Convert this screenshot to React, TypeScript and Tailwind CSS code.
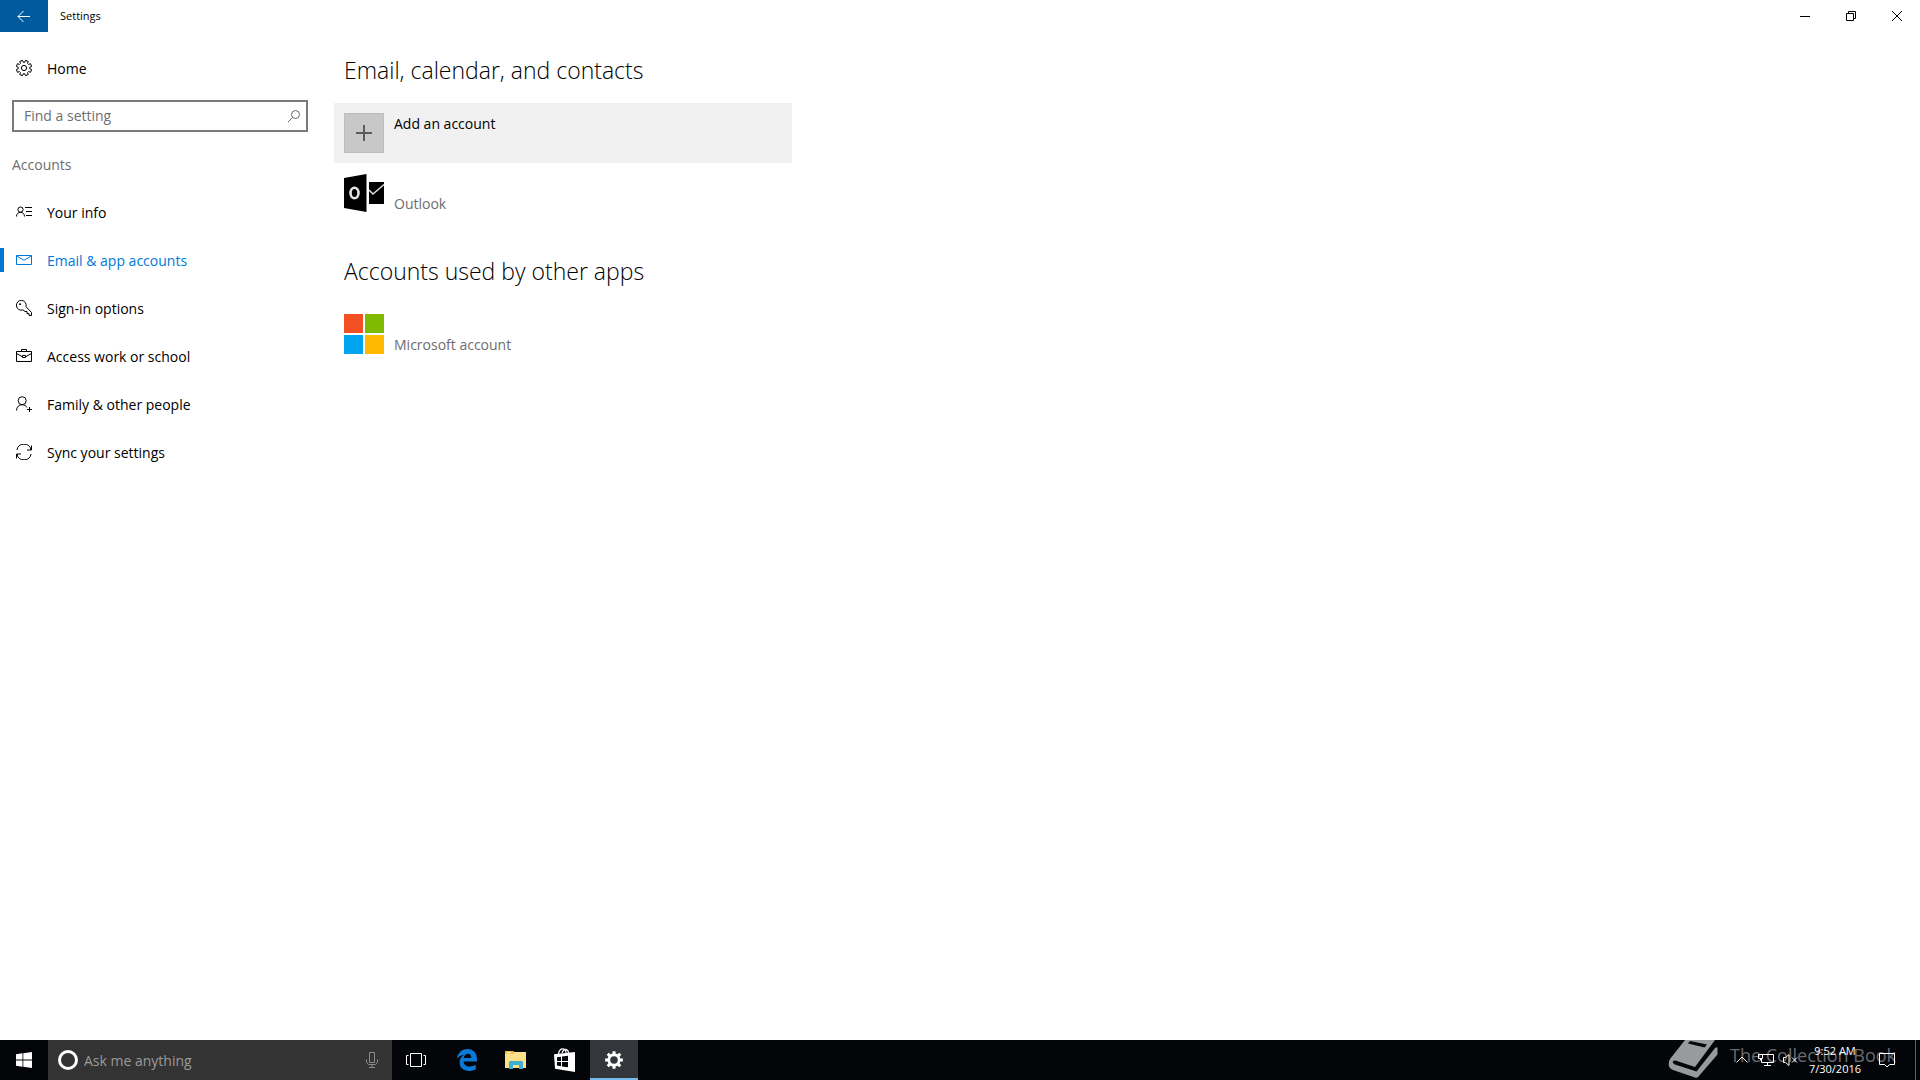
import type { ReactNode } from "react";

type IconProps = { className?: string };

function Line({ children, size = 16, className = "", width = 1 }: { children: ReactNode; size?: number; className?: string; width?: number }) {
  return (
    <svg aria-hidden="true" width={size} height={size} viewBox={`0 0 ${size} ${size}`} fill="none" stroke="currentColor" strokeWidth={width} className={`shrink-0 ${className}`}>
      {children}
    </svg>
  );
}

function gearPath(c: number, teeth: number, outer: number, inner: number, topHalf: number, baseHalf: number, phase: number) {
  const pts: string[] = [];
  for (let i = 0; i < teeth; i++) {
    const a = ((i + phase) / teeth) * Math.PI * 2 - Math.PI / 2;
    const steps: [number, number][] = [[inner, -baseHalf], [outer, -topHalf], [outer, topHalf], [inner, baseHalf]];
    for (const [r, d] of steps) {
      pts.push(`${(c + r * Math.cos(a + d)).toFixed(2)} ${(c + r * Math.sin(a + d)).toFixed(2)}`);
    }
  }
  return `M${pts.join("L")}Z`;
}

const outlineGear = gearPath(8, 8, 7.8, 5.8, 0.2, 0.26, 0.5);
const solidGear = gearPath(10, 8, 9, 6.6, 0.17, 0.24, 0);

const GearIcon = () => (
  <Line>
    <path d={outlineGear} />
    <circle cx="8" cy="8" r="2.6" />
  </Line>
);
const InfoIcon = () => (
  <Line>
    <circle cx="4.5" cy="5.6" r="2.6" />
    <path d="M.5 12.5c0-2.600 1.600-4.200 4-4.200s4 1.600 4 4.200M9 3.500h7M10 7.500h6M10 11.500h6" />
  </Line>
);
const MailIcon = () => (
  <Line>
    <path d="M.5 3.500h15v9H.5zM.5 4l7.500 4.200L15.500 4" />
  </Line>
);
const KeyIcon = () => (
  <Line>
    <path d="M7 9.900A4.900 4.900 0 1 1 10 6.700L15.500 12.500v3h-2.500v-2h-2v-2H9L7 9.900" />
    <circle cx="4" cy="4.200" r=".6" fill="currentColor" />
  </Line>
);
const CaseIcon = () => (
  <Line>
    <path d="M.5 3.500h15v10H.5zM5.500 3.500v-2h5v2M.5 5.500l5.500 3M15.500 5.500l-5.500 3M6.500 7.500h3v2h-3z" />
  </Line>
);
const FamilyIcon = () => (
  <Line>
    <circle cx="6.200" cy="4.700" r="4" />
    <path d="M.5 14.500c.2-3.600 2.200-5.800 5.700-5.800 2.200 0 3.800 1 4.800 2.800M13.500 11v5M11 13.500h5" />
  </Line>
);
const SyncIcon = () => (
  <Line>
    <path d="M.9 6A7.200 7.200 0 0 1 15 5.800M15.500 1.500v4.500H11M15.100 10A7.200 7.200 0 0 1 1 10.200M.5 14.500V10H5" />
  </Line>
);

const WindowsIcon = () => (
  <svg aria-hidden="true" width="16" height="16" viewBox="0 0 16 16" fill="#fff">
    <path d="M0 2.200 6.500 1.300V7.500H0zM7.300 1.200 16 0v7.500H7.300zM0 8.400h6.500v6.300L0 13.800zM7.300 8.400H16V16l-8.700-1.200z" />
  </svg>
);

const MicIcon = () => (
  <svg aria-hidden="true" width="12" height="18" viewBox="0 0 12 18" fill="none" stroke="#8d8d8d">
    <path d="M3.500 1.500h5v10h-5zM.5 8.500v3l2 2h7l2-2v-3M6 13.500v3M3 16.500h6" />
  </svg>
);

const TaskViewIcon = () => (
  <svg aria-hidden="true" width="20" height="14" viewBox="0 0 20 14" fill="none" stroke="#fff">
    <path d="M4.500.5h11v13h-11zM2.500 2.500h-2v9h2M17.500 2.500h2v9h-2" />
  </svg>
);

const EdgeIcon = () => (
  <svg aria-hidden="true" width="20" height="22" viewBox="0 0 20 22" fill="#0a7ad8">
    <path d="M0 9.800C.8 4 4.600 0 10.500 0 16.500 0 20 4.400 20 10v2.500H6.600c.1 3.400 2.900 5 6.200 5 2.300 0 4.300-.6 6-1.700v4.400C17 21.300 14.700 22 12 22 6.400 22 2.600 18.700 2.600 13.600c0-3.300 1.700-6.100 4.600-7.600C4.300 6.200 1.700 7.400 0 9.800zM6.800 8.900h7.500c0-2.600-1.300-4.200-3.500-4.200S7.100 6.400 6.800 8.900z" />
  </svg>
);

const FolderIcon = () => (
  <svg aria-hidden="true" width="22" height="18" viewBox="0 0 22 18">
    <path d="M0 0h8l1 1h12v16H0z" fill="#fce08a" />
    <path d="M0 0h8l1 1v1.500H0z" fill="#e8bd35" />
    <path d="M2 1h4v1H2z" fill="#fff4bd" />
    <path d="M4 18v-7l1-1h12l1 1v7h-4v-4H8v4z" fill="#3fb0cf" />
  </svg>
);

const StoreIcon = () => (
  <svg aria-hidden="true" width="22" height="24" viewBox="0 0 22 24">
    <path d="M4.500 6C5 2.500 7 .7 9 .8c2 .2 3 2 3 4M8 5c1-3 3-4 4.600-3.300C14 2.300 14.500 3.500 14.500 5" fill="none" stroke="#fff" strokeWidth="1.300" />
    <path d="M0 6.200 21 4v20L1 20.700z" fill="#fff" />
    <path d="M3 9.300 7 8.700v4.200H3zM8 8.600l6-.8v5.100H8zM3 14h4v4.200l-4-.6zM8 14h6v5.200l-6-.8z" fill="#030509" />
  </svg>
);

const SolidGear = () => (
  <svg aria-hidden="true" width="20" height="20" viewBox="0 0 20 20">
    <path d={solidGear} fill="#fff" />
    <circle cx="10" cy="10" r="3.800" fill="#33363b" />
  </svg>
);

const OutlookIcon = () => (
  <svg aria-hidden="true" width="40" height="40" viewBox="0 0 40 40" className="shrink-0">
    <path d="M0 5 22.500 1v38L0 35z" fill="#000" />
    <path d="M25 9h15v22H25z" fill="#000" />
    <path d="M25 17l4 4L40 11.500" fill="none" stroke="#ddd" strokeWidth="1.500" />
    <ellipse cx="10.500" cy="20" rx="4" ry="5.300" fill="none" stroke="#e4e4e4" strokeWidth="2.600" />
  </svg>
);

const MicrosoftIcon = () => (
  <svg aria-hidden="true" width="40" height="40" viewBox="0 0 40 40" className="shrink-0">
    <path d="M0 0h19v19H0z" fill="#f25022" />
    <path d="M21 0h19v19H21z" fill="#7fba00" />
    <path d="M0 21h19v19H0z" fill="#00a4ef" />
    <path d="M21 21h19v19H21z" fill="#ffb900" />
  </svg>
);

const BookLogo = ({ className = "" }: IconProps) => (
  <svg aria-hidden="true" width="52" height="40" viewBox="0 0 52 40" className={className}>
    <path d="M17 0 2 19C-.5 24 .5 28.500 5 30l22 7.500c1.500.5 2.500.2 3.500-1L49.500 14.500V7.500h-2L28.500 31.500 7 24.500c-3.500-1.500-2.500-4.500.5-4L27 27 47 0z" fill="#999a9c" />
    <path d="M22 1l17 3.500-2.500 3L20 3.500z" fill="#030509" />
  </svg>
);

const navItems: { label: string; icon: ReactNode; active?: boolean }[] = [
  { label: "Your info", icon: <InfoIcon /> },
  { label: "Email & app accounts", icon: <MailIcon />, active: true },
  { label: "Sign-in options", icon: <KeyIcon /> },
  { label: "Access work or school", icon: <CaseIcon /> },
  { label: "Family & other people", icon: <FamilyIcon /> },
  { label: "Sync your settings", icon: <SyncIcon /> },
];

function TitleBar() {
  return (
    <header className="flex h-8 items-stretch">
      <button aria-label="Back" className="flex w-12 items-center justify-center bg-[#005a9e] text-white">
        <Line size={14}>
          <path d="M1 7.500h12M6.500 2 1 7.500 6.500 13" />
        </Line>
      </button>
      <h1 className="flex flex-1 items-center pl-3 text-[11px]">Settings</h1>
      <button aria-label="Minimize" className="flex w-[46px] items-center justify-center">
        <Line size={10}><path d="M0 5.500h10" /></Line>
      </button>
      <button aria-label="Restore" className="flex w-[46px] items-center justify-center">
        <Line size={10}><path d="M.5 2.500h7v7h-7zM2.500 2.500v-2h7v7h-2" /></Line>
      </button>
      <button aria-label="Close" className="flex w-[46px] items-center justify-center">
        <Line size={10}><path d="M0 0l10 10M10 0 0 10" /></Line>
      </button>
    </header>
  );
}

function Sidebar() {
  return (
    <aside className="w-80 shrink-0 pt-3">
      <a href="#home" className="flex h-12 items-center gap-[15px] pl-4">
        <GearIcon />
        <span className="pt-0.5">Home</span>
      </a>
      <label className="mx-3 mt-2 flex h-8 items-center border-2 border-[#7a7a7a] pr-1.5 pl-2.5">
        <input type="text" aria-label="Find a setting" placeholder="Find a setting" className="min-w-0 flex-1 outline-none placeholder:text-[#707070]" />
        <Line size={12} className="text-[#6a6a6a]">
          <circle cx="7.500" cy="4.500" r="4" />
          <path d="M4.700 7.300 0 12" />
        </Line>
      </label>
      <h2 className="mt-4 flex h-8 items-center pt-0.5 pl-3 text-[#6d6d6d]">Accounts</h2>
      <nav className="mt-2">
        {navItems.map((item) => (
          <a
            key={item.label}
            href="#section"
            aria-current={item.active ? "page" : undefined}
            className={item.active ? "flex h-12 items-center text-[#0078d7]" : "flex h-12 items-center"}
          >
            <span className={item.active ? "mr-3 h-6 w-1 bg-[#0078d7]" : "mr-3 h-6 w-1"} />
            {item.icon}
            <span className="pt-0.5 pl-[15px]">{item.label}</span>
          </a>
        ))}
      </nav>
    </aside>
  );
}

function Content() {
  return (
    <main className="min-w-0 flex-1 pl-3.5">
      <h2 className="flex h-[71px] items-center pt-1 pl-2.5 text-[23px] font-light">Email, calendar, and contacts</h2>
      <button className="flex h-[60px] w-full max-w-[458px] items-start gap-2.5 bg-[#f1f1f1] px-2.5 pt-2.5 text-left">
        <span className="flex size-10 items-center justify-center border border-[#bdbdbd] bg-[#c8c8c8] text-[#5c5c5c]">
          <Line width={2}><path d="M8 0v16M0 8h16" /></Line>
        </span>
        <span className="mt-px leading-5">Add an account</span>
      </button>
      <button className="flex h-[60px] w-full max-w-[458px] items-start gap-2.5 px-2.5 pt-2.5 text-left">
        <OutlookIcon />
        <span className="mt-[21px] leading-5 text-[#6d6d6d]">Outlook</span>
      </button>
      <h2 className="mt-2.5 flex h-[71px] items-center pt-1 pl-2.5 text-[23px] font-light">Accounts used by other apps</h2>
      <button className="flex h-[60px] w-full max-w-[458px] items-start gap-2.5 px-2.5 pt-2.5 text-left">
        <MicrosoftIcon />
        <span className="mt-[21px] leading-5 text-[#6d6d6d]">Microsoft account</span>
      </button>
    </main>
  );
}

function Taskbar() {
  return (
    <footer className="relative flex h-10 items-stretch overflow-hidden bg-[#030509] text-white">
      <button aria-label="Start" className="flex w-12 items-center justify-center"><WindowsIcon /></button>
      <label className="flex w-[344px] items-center bg-[#333333] pr-3.5 pl-2.5">
        <span className="size-5 rounded-full border-[3px] border-white" />
        <input type="text" aria-label="Ask me anything" placeholder="Ask me anything" className="ml-1.5 min-w-0 flex-1 pt-0.5 outline-none placeholder:text-[#9b9b9b]" />
        <MicIcon />
      </label>
      <button aria-label="Task View" className="mr-[3px] flex w-12 items-center justify-center"><TaskViewIcon /></button>
      <div className="flex gap-px">
        <button aria-label="Microsoft Edge" className="flex w-12 items-center justify-center"><EdgeIcon /></button>
        <button aria-label="File Explorer" className="flex w-12 items-center justify-center"><FolderIcon /></button>
        <button aria-label="Store" className="flex w-12 items-center justify-center"><StoreIcon /></button>
        <button aria-label="Settings" className="flex w-12 items-center justify-center border-b-2 border-[#76b9ed] bg-[#33363b] pt-0.5"><SolidGear /></button>
      </div>
      <div aria-hidden="true" className="absolute top-0 right-6 flex items-start gap-2.5">
        <BookLogo />
        <span className="text-[18px] leading-[30px] whitespace-nowrap text-[#696b6e]">The Collection Book</span>
      </div>
      <div className="relative ml-auto flex items-center">
        <button aria-label="Show hidden icons" className="flex w-6 justify-center">
          <Line size={12}><path d="M.5 8.500 6 3l5.500 5.500" /></Line>
        </button>
        <button aria-label="Network" className="flex w-6 justify-center">
          <Line><path d="M4.500 2.500h11v8H3.500v-4M.5 2.500h4v4h-4zM2.500 6.500v2M9.500 10.500v3M6 13.500h7" /></Line>
        </button>
        <button aria-label="Volume muted" className="flex w-6 justify-center">
          <Line><path d="M1.500 5.500h2l3.500-3v11l-3.500-3h-2zM10 5.500l5 5M15 5.500l-5 5" /></Line>
        </button>
        <button className="w-[66px] text-center text-[11px] leading-[18px]">
          9:52 AM
          <br />
          7/30/2016
        </button>
        <button aria-label="Action Center" className="mr-3 ml-[7px] flex w-6 justify-center">
          <Line><path d="M.5 1.500h15v11h-5L8 15l-2.500-2.500h-5z" /></Line>
        </button>
        <button aria-label="Show desktop" className="ml-1 h-full w-[5px] border-l border-[#5c5e61]" />
      </div>
    </footer>
  );
}

export default function App() {
  return (
    <div className="flex min-h-screen flex-col bg-white font-['Open_Sans','Noto_Sans',sans-serif] text-[14px] leading-5 text-black">
      <TitleBar />
      <div className="flex flex-1">
        <Sidebar />
        <Content />
      </div>
      <Taskbar />
    </div>
  );
}
